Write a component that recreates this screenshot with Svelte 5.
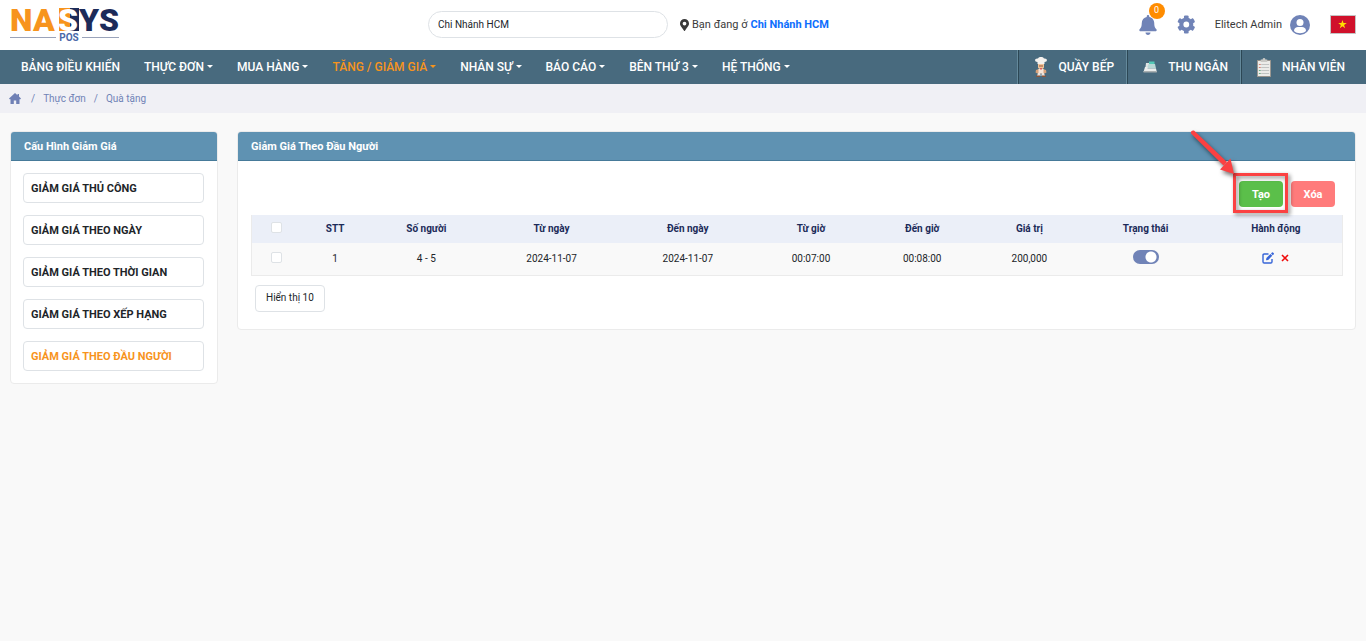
<script>
  const menu = [
    { label: 'BẢNG ĐIỀU KHIỂN', drop: false },
    { label: 'THỰC ĐƠN', drop: true },
    { label: 'MUA HÀNG', drop: true },
    { label: 'TĂNG / GIẢM GIÁ', drop: true, active: true },
    { label: 'NHÂN SỰ', drop: true },
    { label: 'BÁO CÁO', drop: true },
    { label: 'BÊN THỨ 3', drop: true },
    { label: 'HỆ THỐNG', drop: true }
  ];
  const kinds = [
    { label: 'GIẢM GIÁ THỦ CÔNG' },
    { label: 'GIẢM GIÁ THEO NGÀY' },
    { label: 'GIẢM GIÁ THEO THỜI GIAN' },
    { label: 'GIẢM GIÁ THEO XẾP HẠNG' },
    { label: 'GIẢM GIÁ THEO ĐẦU NGƯỜI', active: true }
  ];
  const columns = [
    { label: 'STT', width: 70 },
    { label: 'Số người', width: 112 },
    { label: 'Từ ngày', width: 138 },
    { label: 'Đến ngày', width: 134 },
    { label: 'Từ giờ', width: 112 },
    { label: 'Đến giờ', width: 110 },
    { label: 'Giá trị', width: 104 },
    { label: 'Trạng thái', width: 128 },
    { label: 'Hành động', width: 132 }
  ];
  const rows = [['1', '4 - 5', '2024-11-07', '2024-11-07', '00:07:00', '00:08:00', '200,000']];
  let branch = $state('Chi Nhánh HCM');
</script>

<header class="top">
  <a class="logo" href="#home" aria-label="NASYS POS">
    <svg width="114" height="46" viewBox="0 0 114 46">
      <path d="M49 8h11v23H49z" fill="#f7941d" />
      <path d="M60 8h9v23h-9z" fill="#1c2b59" />
      <g font-family="Roboto, sans-serif" font-weight="900" font-size="32">
        <text x="0" y="31" fill="#f7941d">N</text>
        <text x="23" y="31" fill="#f7941d">A</text>
        <text x="48" y="31" fill="#fff">S</text>
        <text x="69" y="31" fill="#1c2b59">Y</text>
        <text x="89" y="31" fill="#1c2b59">S</text>
      </g>
      <path d="M0 37.500h46M72 37.500h37" stroke="#9aa3ba" />
      <text x="59" y="41" text-anchor="middle" font-family="Roboto, sans-serif" font-weight="700" font-size="10" fill="#4a68a8">POS</text>
    </svg>
  </a>
  <div class="branch">
    <input type="text" aria-label="Chi nhánh" bind:value={branch} />
    <p>
      <svg width="9" height="12" viewBox="0 0 384 512"><path fill="#3a3a3a" d="M172 501C27 291 0 270 0 192a192 192 0 1 1 384 0c0 78-27 99-172 309-10 14-30 14-40 0zm20-229a80 80 0 1 0 0-160 80 80 0 0 0 0 160z" /></svg>
      Bạn đang ở <a href="#branch">Chi Nhánh HCM</a>
    </p>
  </div>
  <div class="tools">
    <button class="bell" aria-label="Thông báo">
      <svg width="18" height="20" viewBox="0 0 448 512"><path fill="#7083b7" d="M224 512c35 0 64-29 64-64H160c0 35 29 64 64 64zm215-150c-19-21-55-52-55-154 0-78-54-140-128-155V32a32 32 0 1 0-64 0v21C118 68 64 130 64 208c0 102-36 133-55 154-6 6-9 14-9 22 0 16 13 32 32 32h384c19 0 32-16 32-32 0-8-3-16-9-22z" /></svg>
      <span>0</span>
    </button>
    <button class="gear" aria-label="Cài đặt">
      <svg width="18" height="19" viewBox="0 0 496 512"><path fill="#7083b7" d="M487 316l-42-25c4-23 4-47 0-70l42-25c5-3 7-9 6-14-11-36-30-68-55-95-4-4-10-5-15-2l-42 24c-18-15-39-27-61-35V25c0-6-4-10-10-12-36-8-73-8-109 0-6 2-9 6-9 12v49c-23 8-43 20-61 35L88 85c-5-3-11-2-15 2-25 27-44 59-55 95-1 5 1 11 6 14l43 25c-5 23-5 47 0 70l-43 25c-5 3-7 9-6 14 11 36 30 68 55 95 4 4 10 5 15 2l43-24c18 15 38 27 61 35v49c0 6 3 10 9 12 36 8 73 8 109 0 6-2 10-6 10-12v-49c22-8 43-20 61-35l42 24c5 3 11 2 15-2 25-27 44-59 55-95 1-5-1-11-6-14zM256 336a80 80 0 1 1 0-160 80 80 0 0 1 0 160z" /></svg>
    </button>
    <button class="user">
      Elitech Admin
      <svg width="20" height="20" viewBox="0 0 20 20"><circle cx="10" cy="10" r="10" fill="#7083b7" /><circle cx="10" cy="7.400" r="3.500" fill="#fff" /><path d="M4 16c0-3 2-4 4-4h4c2 0 4 1 4 4-3 3-9 3-12 0z" fill="#fff" /></svg>
    </button>
    <button class="flag" aria-label="Tiếng Việt">
      <svg width="26" height="19" viewBox="0 0 26 19"><path fill="#d0112b" stroke="#c4c4c4" d="M.5.5h25v18H.5z" /><path fill="#ffdf00" d="M12.500 5l1 3.100h3.300l-2.700 2 1 3.100-2.600-1.900-2.700 1.900 1-3.100-2.600-2h3.200z" /></svg>
    </button>
  </div>
</header>

<nav class="menu">
  <ul>
    {#each menu as item}
      <li><a href="#menu" class:active={item.active} class:drop={item.drop}>{item.label}</a></li>
    {/each}
  </ul>
  <div class="desks">
    <a href="#kitchen">
      <svg width="14" height="20" viewBox="0 0 14 20">
        <path fill="#f1c49b" d="M4 6h6v4.500c-1 2-5 2-6 0z" />
        <path fill="#f4f1ee" d="M3.500 7V5C-.5 4.500 1 .7 4 1.500c1-1.900 5-1.900 6 0 3-.8 4.500 3 .5 3.500v2z" />
        <path fill="#d9a27a" d="M2 13l3-1h4l3 1 .5 2.500-2 1h-7l-2-1z" />
        <path fill="#f5e5d9" d="M4.500 12h5v4h-5z" />
        <path fill="#e9e2dc" d="M4 16h2.500v3H3zM7.500 16H10l1 3H7.500z" />
        <path fill="#8b5338" d="M2.500 18.500h3.500V20H2zM8 18.500h3.500l.5 1.500H8z" />
        <path stroke="#985936" d="M5 9h4" />
        <path fill="#e15d5c" d="M6 11h2v1.500H6z" />
      </svg>
      QUẦY BẾP
    </a>
    <a href="#cashier">
      <svg width="14" height="20" viewBox="0 0 14 20">
        <path fill="#dfe4e3" d="M3 6h3v4H2.500z" />
        <path fill="#54c9b7" d="M6 4.500h5.500V7H6z" />
        <path fill="#b9d8d6" d="M5.500 7H12l1 4.500H4z" />
        <path fill="#eceeed" d="M2 10h3l-.5 1.500H13l.8 3.500H.5z" />
        <path fill="#a9afb0" d="M.5 14h13.300v1.500H.5z" />
      </svg>
      THU NGÂN
    </a>
    <a href="#staff">
      <svg width="14" height="20" viewBox="0 0 15 20" preserveAspectRatio="none">
        <path fill="#97938c" d="M0 3h15v17H0z" />
        <path fill="#ecece9" d="M1 4h13v15H1z" />
        <path fill="#c9c9c5" d="M4 5V2.500h2c0-2 3-2 3 0h2V5z" />
        <path stroke="#bfc2c1" d="M4.500 7.500H13M4.500 10.500H13M4.500 13.500H13M4.500 16.500H13" />
        <path stroke="#d57d71" d="M2 7.500h2M2 10.500h2" /><path stroke="#6aaa83" d="M2 13.500h2M2 16.500h2" />
      </svg>
      NHÂN VIÊN
    </a>
  </div>
</nav>

<nav class="crumbs" aria-label="Đường dẫn">
  <a href="#home" aria-label="Trang chủ">
    <svg width="12" height="11" viewBox="0 0 12 11"><path fill="#6f80b5" d="M6 0l2.500 2.200V1H10v2.500l2 1.900-.6.900h-.9V11H7.200V7.500H4.800V11H1.500V6.300H.6L0 5.400z" /></svg>
  </a>
  <span>/</span><a href="#menu">Thực đơn</a><span>/</span><a href="#gift">Quà tặng</a>
</nav>

<main>
  <aside class="card">
    <h2>Cấu Hình Giảm Giá</h2>
    <ul class="kinds">
      {#each kinds as kind}
        <li><a href="#kind" class:active={kind.active}>{kind.label}</a></li>
      {/each}
    </ul>
  </aside>

  <section class="card">
    <h2>Giảm Giá Theo Đầu Người</h2>
    <div class="body">
      <div class="actions">
        <div class="marked">
          <button class="create">Tạo</button>
          <div class="frame"></div>
          <svg class="arrow" width="50" height="52" viewBox="0 0 50 52">
            <g fill="#fb4142"><path d="M4 8.500Q3.500 5 7 5.500L40 37l-3.500 3.500z" /><path d="M33 44.500l10.500-11L47 49z" /></g>
          </svg>
        </div>
        <button class="delete">Xóa</button>
      </div>
      <table>
        <colgroup>
          <col style="width: 48px" />
          {#each columns as column}<col style="width: {column.width}px" />{/each}
        </colgroup>
        <thead>
          <tr>
            <th><input type="checkbox" aria-label="Chọn tất cả" /></th>
            {#each columns as column}<th>{column.label}</th>{/each}
          </tr>
        </thead>
        <tbody>
          {#each rows as row}
            <tr>
              <td><input type="checkbox" aria-label="Chọn dòng" /></td>
              {#each row as cell}<td>{cell}</td>{/each}
              <td><input type="checkbox" class="switch" aria-label="Trạng thái" checked /></td>
              <td>
                <div class="row-actions">
                  <button aria-label="Sửa">
                    <svg width="12" height="12" viewBox="0 0 12 12" fill="none" stroke="#3765d8"><path stroke-width="1.400" d="M6.500 2H2.200Q1 2 1 3.200v6.600Q1 11 2.200 11h6.600Q10 11 10 9.800V7" /><path fill="#3765d8" stroke="none" d="M4 8.300l.4-2.300L8.500 1.900l1.800 1.800-4.100 4.200zM9 1.400l1-1q.5-.4 1 0l.8.800q.4.500 0 1l-1 1z" /></svg>
                  </button>
                  <button aria-label="Xóa">
                    <svg width="8" height="8" viewBox="0 0 8 8"><path d="M1 1l6 6M7 1L1 7" stroke="#f00b0b" stroke-width="1.600" /></svg>
                  </button>
                </div>
              </td>
            </tr>
          {/each}
        </tbody>
      </table>
      <button class="page-size">Hiển thị 10</button>
    </div>
  </section>
</main>

<style>
  :global(body) { margin: 0; background: #f9f9f9; font: 10px/15px Roboto, sans-serif; color: #212529; }
  * { box-sizing: border-box; }
  a { color: inherit; text-decoration: none; }
  button { font: inherit; color: inherit; background: none; border: 0; padding: 0; }
  ul { list-style: none; margin: 0; padding: 0; }
  svg { display: block; flex: none; }

  .top { display: grid; grid-template-columns: 418px 1fr auto; align-items: center; height: 50px; padding: 0 10px 1px; background: #fff; }
  .logo { align-self: start; }
  .branch { display: flex; align-items: center; gap: 12px; }
  .branch input { width: 240px; height: 27px; padding: 0 9px; border: 1px solid #dee2e6; border-radius: 14px; font: inherit; color: inherit; background: #fff; outline: 0; }
  .branch p { display: flex; align-items: center; gap: 3px; margin: 0; font-size: 11px; color: #3a3a3a; }
  .branch p a { color: #0d6efd; font-weight: 700; }
  .tools { display: flex; align-items: center; gap: 20px; font-size: 11px; color: #3a3a3a; }
  .bell { position: relative; }
  .bell span { position: absolute; left: 10px; top: -12px; width: 16px; height: 16px; border-radius: 8px; background: #ff8c00; color: #fff; font-size: 9px; line-height: 15px; }
  .user { display: flex; align-items: center; gap: 8px; }

  .menu { display: flex; justify-content: space-between; height: 34px; background: #486a7e; color: #fff; font-size: 12px; font-weight: 500; }
  .menu ul { display: flex; align-items: center; gap: 24px; padding-left: 21px; }
  .menu .active { color: #f7941d; }
  .menu .drop::after { content: ''; display: inline-block; margin-left: 3px; vertical-align: 3px; border: 3px solid transparent; border-top-color: currentColor; border-bottom: 0; }
  .desks { display: flex; }
  .desks a { display: flex; align-items: center; gap: 11px; padding: 0 13px 0 15px; border-left: 1px solid #2c4755; box-shadow: -1px 0 #64899b; }
  .desks a:last-child { padding-right: 21px; }

  .crumbs { display: flex; align-items: center; gap: 8px; height: 29px; padding: 0 9px; background: #f0f0f5; color: #7083b7; }
  .crumbs a:first-child { margin-right: 2px; }

  main { display: grid; grid-template-columns: 208px minmax(0, 1fr); align-items: start; gap: 19px; padding: 18px 10px; }
  .card { border: 1px solid #ebebeb; border-radius: 4px; background: #fff; }
  .card h2 { margin: 0; height: 29px; padding: 0 13px; border-bottom: 1px solid #467a99; border-radius: 3px 3px 0 0; background: #5f92b2; color: #fff; font-size: 11px; line-height: 29px; font-weight: 700; }
  .kinds { display: grid; gap: 12px; padding: 12px 13px 12px 12px; }
  .kinds a { display: block; height: 30px; padding: 0 7px; border: 1px solid #dee2e6; border-radius: 4px; font-size: 11px; line-height: 29px; font-weight: 700; }
  .kinds .active { color: #f7941d; }

  .body { padding: 20px 12px 17px 13px; }
  .actions { display: flex; justify-content: flex-end; gap: 8px; padding-right: 8px; margin-bottom: 8px; }
  .actions button { height: 26px; width: 44px; border-radius: 4px; color: #fff; font-size: 11px; font-weight: 700; }
  .marked { position: relative; }
  .create { background: #5bbf4a; }
  .actions .delete { background: #ff7b7b; }
  .frame { position: absolute; inset: -8px -5px -6px -6px; border: 3px solid #fb4142; filter: drop-shadow(2px 2px 2px #0007); }
  .arrow { position: absolute; right: 46px; bottom: 30px; filter: drop-shadow(2px 3px 2px #0008); }

  table { width: 100%; table-layout: fixed; border-collapse: separate; border-spacing: 0; border: 1px solid #ebebeb; border-top: 0; text-align: center; }
  th, td { padding: 0 0 2px; }
  th { height: 28px; background: #ebeff8; color: #1c2b59; font-weight: 700; }
  td { height: 32px; background: #f9f9f9; }
  input[type='checkbox'] { appearance: none; display: inline-block; width: 11px; height: 11px; margin: 0 0 2px; border: 1px solid #dee2e6; border-radius: 2px; background: #fff; vertical-align: middle; }
  input.switch { width: 26px; height: 14px; border: 0; border-radius: 7px; background: radial-gradient(circle at 18px 7px, #fff 5px, #7083b7 6px); }
  .row-actions { display: flex; justify-content: center; align-items: center; gap: 7px; }
  .page-size { height: 27px; margin: 9px 0 0 4px; padding: 0 10px 2px; border: 1px solid #dee2e6; border-radius: 4px; background: #fff; }
</style>
